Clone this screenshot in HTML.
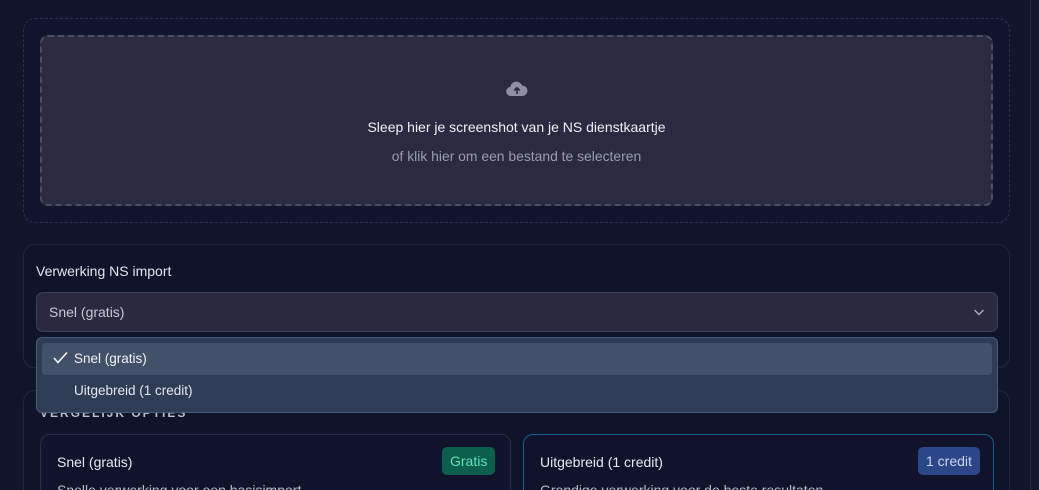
<!DOCTYPE html>
<html style="width:1039px;height:490px;overflow:hidden"><head><style>
*{box-sizing:border-box;margin:0;padding:0}
body{width:1039px;height:490px;overflow:hidden;background:#121629;font-family:"Liberation Sans",sans-serif;position:relative;color:#e6e8f0}
.abs{position:absolute}
.outer{left:-20px;top:-20px;width:1051px;height:530px;border:1px solid #262b42;border-radius:14px;background:#11152b}
.zone{left:23px;top:18px;width:987px;height:205px;border:1px dashed #2a3050;border-radius:12px;background:#10142c}
.drop{left:40px;top:35px;width:953px;height:171px;border:2px dashed #4b4d65;border-radius:8px;background:#2a2b40}
.card{left:23px;width:987px;border:1px solid #20263f;border-radius:12px;background:#10142b}
.sel{left:36px;top:292px;width:962px;height:40px;background:#29293f;border:1px solid #3d4057;border-radius:7px;font-size:14px;color:#c6c8d4;padding:11px 12px}
.dd{left:36px;top:337px;width:962px;height:76px;background:#2f3c56;border:1px solid #475878;border-radius:6px}
.hi{left:5px;top:5px;width:950px;height:32px;background:#435069;border-radius:4px}
.sub{top:434px;width:471px;height:80px;border:1px solid #262d47;border-radius:10px;background:#10132b}
.badge{border-radius:5px;font-size:14px;padding:6px 8px}
</style></head><body>
<div class="abs outer"></div>
<div class="abs zone"></div>
<div class="abs drop"></div>
<svg class="abs" style="left:506px;top:79px" width="22" height="20" viewBox="0 0 22 20"><path d="M5 17a4.5 4.5 0 0 1-.6-9A6 6 0 0 1 16 6.5a4.5 4.5 0 0 1 .5 10.5z" fill="#8e8fa3"/><path d="M11 15V9M8.2 11.5L11 8.7l2.8 2.8" stroke="#2a2b40" stroke-width="1.6" fill="none"/></svg>
<div class="abs" style="left:0;width:1033px;top:119px;text-align:center;font-size:14px;color:#eef0f6">Sleep hier je screenshot van je NS dienstkaartje</div>
<div class="abs" style="left:0;width:1033px;top:148px;text-align:center;font-size:13.9px;color:#9a9cae">of klik hier om een bestand te selecteren</div>

<div class="abs card" style="top:244px;height:124px"></div>
<div class="abs" style="left:36px;top:263px;font-size:14px;color:#e2e4ec">Verwerking NS import</div>
<div class="abs sel">Snel (gratis)</div>
<svg class="abs" style="left:973px;top:307px" width="12" height="10" viewBox="0 0 12 10"><path d="M1.5 3l4.5 4.5L10.5 3" stroke="#a9abbb" stroke-width="1.5" fill="none"/></svg>

<div class="abs card" style="top:390px;height:130px"></div>
<div class="abs" style="left:40px;top:406px;font-size:12px;font-weight:bold;letter-spacing:2px;color:#b8bccb">VERGELIJK OPTIES</div>
<div class="abs sub" style="left:40px"></div>
<div class="abs" style="left:57px;top:454px;font-size:14px;color:#e6e8f0">Snel (gratis)</div>
<div class="abs badge" style="left:442px;top:447px;background:#0b5f4c;color:#63e0b5">Gratis</div>
<div class="abs" style="left:57px;top:482px;font-size:14px;color:#b7bac8">Snelle verwerking voor een basisimport</div>
<div class="abs sub" style="left:523px;border-color:#135f8e"></div>
<div class="abs" style="left:540px;top:454px;font-size:14px;color:#e6e8f0">Uitgebreid (1 credit)</div>
<div class="abs badge" style="left:918px;top:447px;background:#2b4787;color:#c9d5f5">1 credit</div>
<div class="abs" style="left:540px;top:482px;font-size:14px;color:#b7bac8">Grondige verwerking voor de beste resultaten</div>

<div class="abs dd"><div class="abs hi"></div>
<svg class="abs" style="left:16px;top:13px" width="15" height="13" viewBox="0 0 15 13"><path d="M1 7l4 4.5L14 1.5" stroke="#f2f4f8" stroke-width="1.6" fill="none"/></svg>
<div class="abs" style="left:37px;top:13px;font-size:13.5px;color:#f0f2f6">Snel (gratis)</div>
<div class="abs" style="left:37px;top:45px;font-size:13.5px;color:#e4e7ef">Uitgebreid (1 credit)</div>
</div>
</body></html>
